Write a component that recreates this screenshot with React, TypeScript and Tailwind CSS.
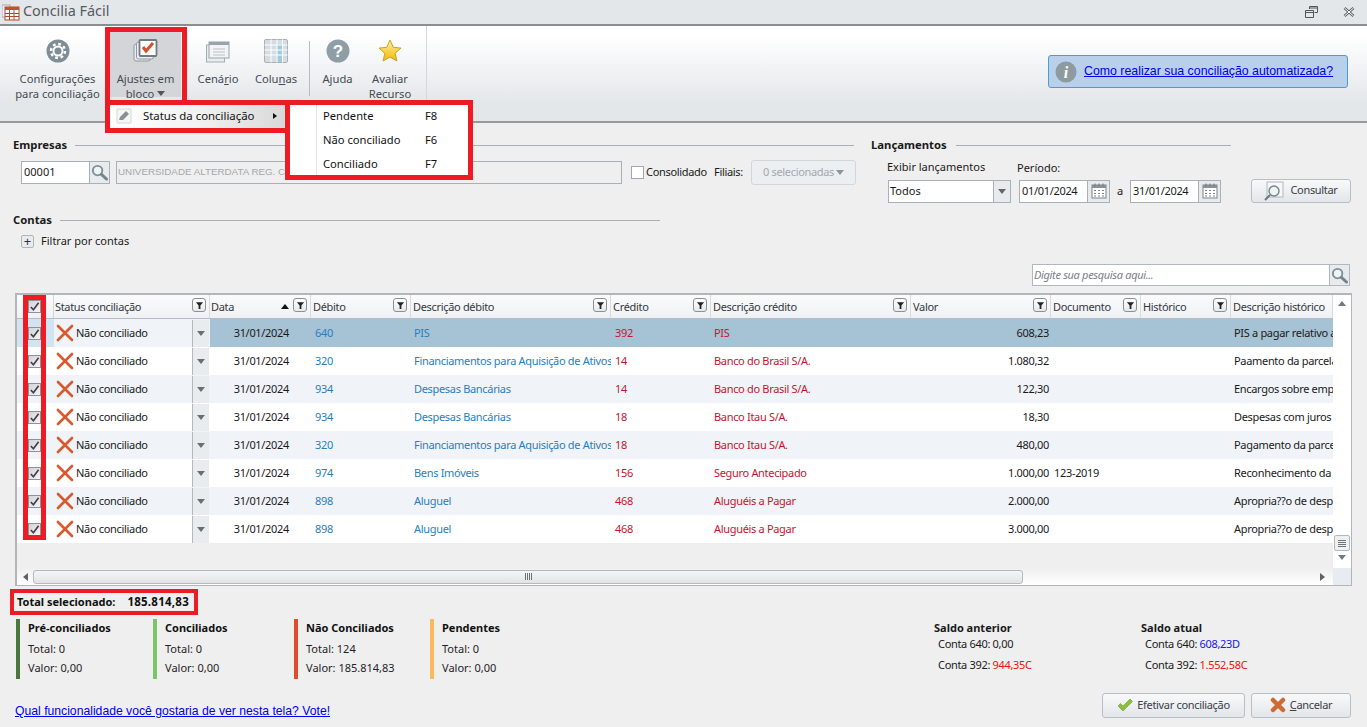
import React from "react";

const FONT = "[font-family:'Noto_Sans',sans-serif]";
const ARIAL = "[font-family:'Liberation_Sans',Arial,sans-serif]";
const GRID = "grid grid-cols-[37px_156px_101px_100px_200px_100px_200px_140px_90px_90px_102px]";
const TIGHT = "text-[11px] tracking-[-0.32px]";

function Search({ className = "w-[17px] h-[17px]" }: { className?: string }) {
  return (
    <svg viewBox="0 0 18 18" className={className}>
      <circle cx="7" cy="7" r="5" fill="#eef3f5" stroke="#7d9098" strokeWidth="2" />
      <path d="M11 11l5.5 5" stroke="#74858d" strokeWidth="3" strokeLinecap="round" />
    </svg>
  );
}

function Calendar() {
  return (
    <svg viewBox="0 0 16 16" className="w-[16px] h-[16px]">
      <rect x="1" y="2" width="14" height="13" fill="#fff" stroke="#7c8388" />
      <rect x="1" y="2" width="14" height="3" fill="#8b9296" />
      <path d="M4 0.5v3M8 0.5v3M12 0.5v3" stroke="#6f767a" />
      <path d="M3 7h2v1H3zM7 7h2v1H7zM11 7h2v1h-2zM3 10h2v1H3zM7 10h2v1H7zM11 10h2v1h-2zM3 12.500h2v1H3zM7 12.500h2v1H7zM11 12.500h2v1h-2z" fill="#7c8388" />
    </svg>
  );
}

function Filter() {
  return (
    <span className="flex h-[14px] w-[14px] items-center justify-center rounded-[3px] border border-[#8c9196] bg-gradient-to-b from-white to-[#e6e9ec]">
      <svg viewBox="0 0 10 10" className="h-[9px] w-[9px]">
        <path d="M1 1.500h8L6 5v4H4V5z" fill="#222" />
      </svg>
    </span>
  );
}

function RedX({ className = "w-[18px] h-[18px]" }: { className?: string }) {
  return (
    <svg viewBox="0 0 18 18" className={className}>
      <path d="M2 2l14 14M16 2L2 16" stroke="#d9592f" strokeWidth="2.700" strokeLinecap="round" />
    </svg>
  );
}

function CheckBox() {
  return (
    <span className="flex h-[13px] w-[13px] items-center justify-center border border-[#8d9299] bg-gradient-to-br from-[#d0d3d8] to-[#f5f6f8]">
      <svg viewBox="0 0 12 12" className="h-[11px] w-[11px]">
        <path d="M2 6.500l2.800 3L10.500 2" fill="none" stroke="#3c3f44" strokeWidth="1.800" />
      </svg>
    </span>
  );
}

function Caret({ up = false, className = "" }: { up?: boolean; className?: string }) {
  return (
    <svg viewBox="0 0 8 5" className={`h-[5px] w-[8px] ${className}`}>
      <path d={up ? "M0 5l4-5 4 5z" : "M0 0l4 5 4-5z"} fill="currentColor" />
    </svg>
  );
}

function RibbonButton({ icon, lines, active = false, widthClass }: { icon: React.ReactNode; lines: React.ReactNode[]; active?: boolean; widthClass: string }) {
  return (
    <div className={`flex h-[66px] shrink-0 flex-col items-center ${widthClass} ${active ? "bg-[#d3d5d8]" : ""}`}>
      <div className="flex h-[33px] shrink-0 items-end justify-center pb-[1px]">{icon}</div>
      <div className="mt-[7px] text-center text-[11.200px] leading-[15px] text-[#444b52]">
        {lines.map((l, i) => (
          <div key={i} className="whitespace-nowrap">{l}</div>
        ))}
      </div>
    </div>
  );
}

function SectionTitle({ title, lineClass }: { title: string; lineClass: string }) {
  return (
    <div className="flex items-center">
      <span className="text-[11.300px] font-bold leading-[16px] text-[#1a1a1a]">{title}</span>
      <span className={`h-px bg-[#a9afb8] ${lineClass}`} />
    </div>
  );
}

const btn = `flex items-center justify-center rounded-[3px] border border-[#b9bec4] bg-gradient-to-b from-[#f8f9fa] to-[#e3e6ea] pb-[1px] text-[#3a4046] ${TIGHT}`;

const HEAD: [string, boolean, boolean][] = [
  ["Status conciliação", true, false],
  ["Data", true, true],
  ["Débito", true, false],
  ["Descrição débito", true, false],
  ["Crédito", true, false],
  ["Descrição crédito", true, false],
  ["Valor", true, false],
  ["Documento", true, false],
  ["Histórico", true, false],
  ["Descrição histórico", false, false],
];

const ROWS = [
  ["640", "PIS", "392", "PIS", "608,23", "", "PIS a pagar relativo a"],
  ["320", "Financiamentos para Aquisição de Ativos", "14", "Banco do Brasil S/A.", "1.080,32", "", "Paamento da parcela"],
  ["934", "Despesas Bancárias", "14", "Banco do Brasil S/A.", "122,30", "", "Encargos sobre empre"],
  ["934", "Despesas Bancárias", "18", "Banco Itau S/A.", "18,30", "", "Despesas com juros s"],
  ["320", "Financiamentos para Aquisição de Ativos", "18", "Banco Itau S/A.", "480,00", "", "Pagamento da parcela"],
  ["974", "Bens Imóveis", "156", "Seguro Antecipado", "1.000,00", "123-2019", "Reconhecimento da d"],
  ["898", "Aluguel", "468", "Aluguéis a Pagar", "2.000,00", "", "Apropria??o de despe"],
  ["898", "Aluguel", "468", "Aluguéis a Pagar", "3.000,00", "", "Apropria??o de despe"],
];

const cell = `overflow-hidden whitespace-nowrap px-[3px] leading-[28px] ${TIGHT}`;

function Stat({ bar, title, total, valor, widthClass }: { bar: string; title: string; total: string; valor: string; widthClass: string }) {
  return (
    <div className={`flex h-[60px] ${widthClass}`}>
      <span className={`w-[4px] ${bar}`} />
      <div className="ml-[8px] text-[11px] text-[#1f2327]">
        <div className="font-bold leading-[18px] text-[#111]">{title}</div>
        <div className="mt-[2px] leading-[19px]">Total: {total}</div>
        <div className="leading-[19px]">Valor: {valor}</div>
      </div>
    </div>
  );
}

function Saldo({ title, a, b, aClass, bClass, widthClass }: { title: string; a: string; b: string; aClass: string; bClass: string; widthClass: string }) {
  return (
    <div className={`text-[#1a1a1a] ${TIGHT} ${widthClass}`}>
      <div className="text-[11px] font-bold leading-[16px] tracking-normal">{title}</div>
      <div className="ml-[4px] leading-[16px]">Conta 640: <span className={aClass}>{a}</span></div>
      <div className="ml-[4px] mt-[5px] leading-[16px]">Conta 392: <span className={bClass}>{b}</span></div>
    </div>
  );
}

export default function App() {
  return (
    <div className={`relative flex h-[727px] w-[1367px] flex-col overflow-hidden bg-[#efefef] ${FONT}`}>
      {/* Title bar */}
      <div className="flex h-[26px] shrink-0 items-center border-b-2 border-[#8b8e91] bg-[#e4e7ea] pl-[2px]">
        <svg viewBox="0 0 18 18" className="h-[18px] w-[18px]">
          <rect x="0" y="2" width="8" height="12" fill="#f1f1f1" stroke="#a8a8a8" />
          <rect x="3" y="4" width="14" height="13" fill="#fff" stroke="#b04a2c" />
          <rect x="3" y="4" width="14" height="3" fill="#c0532f" />
          <path d="M3 10.500h14M3 13.500h14M7.500 7v10M12 7v10" stroke="#b04a2c" />
        </svg>
        <span className="ml-[3px] pb-[2px] text-[14.400px] text-[#555b60]">Concilia Fácil</span>
        <div className="ml-auto flex items-center">
          <svg viewBox="0 0 13 12" className="h-[12px] w-[13px] text-[#51565a]">
            <path d="M4.500 3V.5h8v6H9.500M.5 4.500h8v7h-8zM.5 6.500h8M4.500 2h8" fill="none" stroke="currentColor" />
          </svg>
          <svg viewBox="0 0 12 10" className="ml-[25px] mr-[12px] h-[10px] w-[12px]">
            <path d="M1.500 1l9 8M10.500 1l-9 8" stroke="#5c6165" strokeWidth="2.600" />
            <path d="M1.500 1l9 8M10.500 1l-9 8" stroke="#fff" strokeWidth="1" />
          </svg>
        </div>
      </div>

      {/* Ribbon */}
      <div className="flex h-[97px] shrink-0 items-start border-b-2 border-[#96999d] bg-gradient-to-b from-white from-[10%] to-[#e4e7ea] to-[80%]">
        <div className="flex h-[77px] w-[427px] shrink-0 items-start border-r border-[#d5d7da] pt-[5px]">
          <div className="w-[14px] shrink-0" />
          <RibbonButton
            widthClass="w-[87px]"
            lines={["Configurações", "para conciliação"]}
            icon={
              <svg viewBox="0 0 24 24" className="h-[24px] w-[24px]">
                <circle cx="12" cy="12" r="11.500" fill="#7f8d94" />
                <circle cx="12" cy="12" r="4.500" fill="none" stroke="#fff" strokeWidth="2" />
                <circle cx="12" cy="12" r="7" fill="none" stroke="#fff" strokeWidth="2.500" strokeDasharray="2.800 2.700" />
              </svg>
            }
          />
          <div className="w-[9px] shrink-0" />
          <RibbonButton
            active
            widthClass="w-[71px]"
            lines={[
              <>A<u>j</u>ustes em</>,
              <span className="inline-flex items-center gap-[3px]">bloco<Caret className="h-[3px] w-[5px] text-[#555]" /></span>,
            ]}
            icon={
              <svg viewBox="0 0 26 24" className="h-[24px] w-[26px]">
                <rect x="1" y="5" width="16" height="17" rx="2" fill="#e9ecee" stroke="#8f9aa0" />
                <rect x="3.500" y="3" width="17" height="17" rx="2" fill="#eef0f2" stroke="#8f9aa0" />
                <rect x="6.500" y="1" width="17" height="16" rx="1" fill="#fff" stroke="#707a80" strokeWidth="1.800" />
                <path d="M10 8l3 4 7-8" fill="none" stroke="#d2512a" strokeWidth="3" />
              </svg>
            }
          />
          <RibbonButton
            widthClass="w-[62px] ml-[6px]"
            lines={[<>Cená<u>r</u>io</>]}
            icon={
              <svg viewBox="0 0 24 24" className="h-[24px] w-[24px]">
                <rect x="0.500" y="6" width="18" height="17" fill="#e9edf0" stroke="#a2adb3" />
                <rect x="3" y="3" width="20" height="16" fill="#f2f4f5" stroke="#98a4ab" />
                <rect x="3" y="3" width="20" height="3" fill="#98a4ab" />
                <path d="M7 10h12M7 13h12M7 16h12" stroke="#b9c2c7" />
              </svg>
            }
          />
          <RibbonButton
            widthClass="w-[54px]"
            lines={[<>Colu<u>n</u>as</>]}
            icon={
              <svg viewBox="0 0 24 24" className="h-[24px] w-[24px]">
                <rect x="0.500" y="0.500" width="23" height="23" rx="1.500" fill="#d5dde2" stroke="#a7b1b7" />
                <rect x="13" y="5" width="5" height="18" fill="#9fcbe0" />
                <path d="M0.500 6h23M0.500 11h23M0.500 16h23M7 0.500v23M13 0.500v23M18.500 0.500v23" stroke="#fff" />
              </svg>
            }
          />
          <div className="ml-[6px] mt-[10px] h-[55px] w-px shrink-0 bg-[#b7bcc0]" />
          <RibbonButton
            widthClass="w-[55px]"
            lines={["Ajuda"]}
            icon={
              <svg viewBox="0 0 24 24" className="h-[24px] w-[24px]">
                <circle cx="12" cy="12" r="11.500" fill="#8f9ea6" />
                <text x="12" y="18" textAnchor="middle" fontSize="17" fontWeight="700" fill="#fff" fontFamily="Liberation Sans">?</text>
              </svg>
            }
          />
          <RibbonButton
            widthClass="w-[50px]"
            lines={["Avaliar", "Recurso"]}
            icon={
              <svg viewBox="0 0 24 24" className="h-[24px] w-[24px]">
                <defs>
                  <linearGradient id="star" x1="0" x2="0" y1="0" y2="1">
                    <stop offset="0" stopColor="#fff2a0" />
                    <stop offset="1" stopColor="#f2b705" />
                  </linearGradient>
                </defs>
                <path d="M12 1l3.300 7.300 7.700.8-5.800 5.100 1.700 7.800L12 18l-6.900 4 1.700-7.800L1 9.100l7.700-.8z" fill="url(#star)" stroke="#c9a227" strokeLinejoin="round" />
              </svg>
            }
          />
        </div>
        <div className="ml-auto mr-[19px] mt-[29px] flex h-[33px] w-[300px] items-center rounded-[3px] border border-[#4a9bd6] bg-[#b9d0ea] pl-[6px]">
          <svg viewBox="0 0 22 22" className="h-[22px] w-[22px] shrink-0">
            <circle cx="11" cy="11" r="10.500" fill="#8d9a9f" />
            <text x="11" y="17" textAnchor="middle" fontSize="16" fontWeight="700" fontStyle="italic" fill="#fff" fontFamily="Liberation Serif">i</text>
          </svg>
          <a className={`ml-[7px] whitespace-nowrap text-[12.350px] text-[#0000ee] underline ${ARIAL}`}>Como realizar sua conciliação automatizada?</a>
        </div>
      </div>

      {/* Filters */}
      <div className="flex h-[140px] shrink-0 pt-[14px]">
        <div className="w-[871px] shrink-0 pl-[13px]">
          <SectionTitle title="Empresas" lineClass="ml-[8px] w-[779px]" />
          <div className="ml-[8px] mt-[7px] flex items-center">
            <div className="flex h-[23px] w-[89px] border border-[#aab0b8] bg-white">
              <span className="flex-1 pl-[2px] text-[11px] leading-[20px] text-[#1a1a1a]">00001</span>
              <span className="flex w-[20px] items-center justify-center border-l border-[#aab0b8] bg-[#e8ebee]"><Search /></span>
            </div>
            <div className={`ml-[6px] flex h-[23px] w-[506px] items-center border border-[#aab0b8] bg-[#efefef] pl-[1px] text-[9.800px] text-[#a4a8ac] ${ARIAL}`}>UNIVERSIDADE ALTERDATA REG. CONTABIL</div>
            <span className="ml-[9px] h-[13px] w-[13px] border border-[#a0a6ad] bg-white" />
            <span className={`ml-[2px] w-[59px] whitespace-nowrap text-[#1a1a1a] ${TIGHT}`}>Consolidado</span>
            <span className={`ml-[9px] w-[30px] whitespace-nowrap text-[#1a1a1a] ${TIGHT}`}>Filiais:</span>
            <div className={`ml-[7px] flex h-[25px] w-[105px] items-center justify-center gap-[2px] rounded-[3px] border border-[#d2d6da] bg-[#eceff2] pb-[1px] text-[#a3a8ad] ${TIGHT}`}>
              0 selecionadas <Caret className="h-[3px] w-[6px] text-[#8f9499]" />
            </div>
          </div>
          <div className="mt-[27px]">
            <SectionTitle title="Contas" lineClass="ml-[8px] w-[600px]" />
          </div>
          <div className="ml-[8px] mt-[5px] flex items-center">
            <span className="flex h-[13px] w-[13px] items-center justify-center rounded-[2px] border border-[#b0b5bb] bg-[#e9ecef] text-[13px] leading-none text-[#333]">+</span>
            <span className="ml-[7px] text-[11px] leading-[16px] text-[#1a1a1a]">Filtrar por contas</span>
          </div>
        </div>
        <div className="flex-1">
          <SectionTitle title="Lançamentos" lineClass="ml-[9px] w-[275px]" />
          <div className="mt-[6px] flex text-[11px] leading-[16px] text-[#1a1a1a]">
            <span className="ml-[16px] w-[130px]">Exibir lançamentos</span>
            <span className="mt-[1px]">Período:</span>
          </div>
          <div className="mt-[3px] flex items-center">
            <div className="ml-[17px] flex h-[23px] w-[123px] border border-[#aab0b8] bg-white">
              <span className="flex-1 pl-[1px] text-[11px] leading-[19px] text-[#1a1a1a]">Todos</span>
              <span className="flex w-[17px] items-center justify-center border-l border-[#aab0b8] bg-[#e8ebee] text-[#666]"><Caret /></span>
            </div>
            <div className="ml-[8px] flex h-[23px] w-[91px] border border-[#aab0b8] bg-white">
              <span className={`flex-1 pl-[2px] leading-[19px] text-[#1a1a1a] ${TIGHT}`}>01/01/2024</span>
              <span className="flex w-[22px] items-center justify-center border-l border-[#aab0b8] bg-[#e8ebee]"><Calendar /></span>
            </div>
            <span className="w-[20px] text-center text-[11px] text-[#1a1a1a]">a</span>
            <div className="flex h-[23px] w-[91px] border border-[#aab0b8] bg-white">
              <span className={`flex-1 pl-[2px] leading-[19px] text-[#1a1a1a] ${TIGHT}`}>31/01/2024</span>
              <span className="flex w-[22px] items-center justify-center border-l border-[#aab0b8] bg-[#e8ebee]"><Calendar /></span>
            </div>
            <div className={`${btn} ml-[30px] h-[24px] w-[100px] gap-[6px]`}>
              <svg viewBox="0 0 20 20" className="h-[20px] w-[20px]">
                <rect x="3" y="1" width="16" height="15" fill="#f7f8f9" stroke="#b2b7bc" />
                <circle cx="10" cy="10" r="5" fill="#eef4f4" stroke="#75848a" strokeWidth="1.400" />
                <path d="M6 14l-5 5" stroke="#6a777d" strokeWidth="2" />
              </svg>
              Consultar
            </div>
          </div>
        </div>
      </div>

      {/* Search */}
      <div className="flex h-[30px] shrink-0 justify-end pr-[17px] pt-[1px]">
        <div className="flex h-[22px] w-[318px] border border-[#b3b8be] bg-white">
          <span className={`flex-1 pl-[1px] italic leading-[19px] text-[#7b8086] ${TIGHT}`}>Digite sua pesquisa aqui...</span>
          <span className="flex w-[20px] items-center justify-center border-l border-[#b3b8be] bg-[#e8ebee]"><Search /></span>
        </div>
      </div>

      {/* Table */}
      <div className="mx-[15px] flex h-[293px] w-[1337px] shrink-0 flex-col border-2 border-b-[1px] border-r-[1px] border-[#b2b6bb]">
        <div className="flex h-[273px] shrink-0">
          <div className="w-[1316px] shrink-0 overflow-hidden">
            <div className={`${GRID} h-[24px] border-b border-[#b5bcc9] bg-gradient-to-b from-[#fbfbfc] to-[#eff1f4]`}>
              <div className="flex items-center justify-center border-r border-[#d2d6dc] pr-[2px]"><CheckBox /></div>
              {HEAD.map(([t, f, s], i) => (
                <div key={t} className={`flex items-center border-r border-[#d7dbe0] pr-[3px] text-[#34383d] ${i < 2 ? "pl-[1px]" : "pl-[2px]"} ${TIGHT}`}>
                  <span className="flex-1 whitespace-nowrap pt-[1px]">{t}</span>
                  {s && <Caret up className="mr-[4px] h-[4px] w-[7px] text-[#111]" />}
                  {f && <span className="-mt-[3px]"><Filter /></span>}
                </div>
              ))}
            </div>
            {ROWS.map((r, i) => {
              const selected = i === 0;
              const base = i % 2 === 0 ? "bg-[#f0f4f9]" : "bg-white";
              const data = selected ? "bg-[#a6c3d5]" : base;
              return (
                <div key={i} className={`${GRID} h-[28px]`}>
                  <div className={`flex items-center justify-center pr-[2px] ${selected ? "bg-[#d2e3f2]" : base}`}><CheckBox /></div>
                  <div className={`flex items-center ${base}`}>
                    <RedX className="ml-[2px] h-[18px] w-[18px] shrink-0" />
                    <span className={`ml-[2px] flex-1 whitespace-nowrap text-[#1a1a1a] ${TIGHT}`}>Não conciliado</span>
                    <span className="mr-[1px] flex h-[27px] w-[17px] items-center justify-center border-l border-[#b4b8bd] bg-[#e9ecef] text-[#6a6f74]"><Caret className="h-[3px] w-[6px]" /></span>
                  </div>
                  <div className={`${cell} ${data} pr-[22px] text-right text-[#1a1a1a]`}>31/01/2024</div>
                  <div className={`${cell} ${data} pl-[4px] text-[#2a7dc0]`}>{r[0]}</div>
                  <div className={`${cell} ${data} text-[#2a7dc0]`}>{r[1]}</div>
                  <div className={`${cell} ${data} pl-[4px] text-[#c5142f]`}>{r[2]}</div>
                  <div className={`${cell} ${data} text-[#c5142f]`}>{r[3]}</div>
                  <div className={`${cell} ${data} pr-[2px] text-right text-[#1a1a1a]`}>{r[4]}</div>
                  <div className={`${cell} ${data} text-[#1a1a1a]`}>{r[5]}</div>
                  <div className={data} />
                  <div className={`${cell} ${data} text-[#1a1a1a]`}>{r[6]}</div>
                </div>
              );
            })}
          </div>
          <div className="flex w-[18px] shrink-0 flex-col items-center bg-white">
            <Caret up className="mt-[6px] text-[#74797e]" />
            <div className="mt-auto flex h-[16px] w-[16px] items-center justify-center rounded-[2px] border border-[#b4b9be] bg-[#eef0f2]">
              <svg viewBox="0 0 8 7" className="h-[7px] w-[8px]"><path d="M0 .5h8M0 2.500h8M0 4.500h8M0 6.500h8" stroke="#6e7378" /></svg>
            </div>
            <Caret className="mb-[8px] mt-[4px] text-[#74797e]" />
          </div>
        </div>
        <div className="flex h-[17px] shrink-0">
          <div className="flex w-[1316px] shrink-0 items-center bg-gradient-to-b from-[#efefef] to-white">
            <svg viewBox="0 0 5 8" className="ml-[6px] h-[8px] w-[5px] text-[#5d6267]"><path d="M5 0L0 4l5 4z" fill="currentColor" /></svg>
            <div className="ml-[5px] flex h-[14px] w-[990px] items-center justify-center rounded-[3px] border border-[#b4b9be] bg-gradient-to-b from-[#f4f5f6] to-[#e1e4e7]">
              <svg viewBox="0 0 7 7" className="h-[7px] w-[7px]"><path d="M.5 0v7M2.500 0v7M4.500 0v7M6.500 0v7" stroke="#6e7378" /></svg>
            </div>
            <svg viewBox="0 0 5 8" className="ml-auto mr-[8px] h-[8px] w-[5px] text-[#5d6267]"><path d="M0 0l5 4-5 4z" fill="currentColor" /></svg>
          </div>
          <div className="flex-1 bg-[#e8ebef]" />
        </div>
      </div>

      {/* Total */}
      <div className="ml-[17px] mt-[8px] h-[20px] shrink-0 text-[11px] font-bold leading-[16px] text-[#111]">
        Total selecionado:<span className="ml-[12px] text-[11.500px] tracking-[0.25px]">185.814,83</span>
      </div>

      {/* Stats */}
      <div className="mt-[5px] flex h-[60px] shrink-0 pl-[16px]">
        <Stat widthClass="w-[137px]" bar="bg-[#47773c]" title="Pré-conciliados" total="0" valor="0,00" />
        <Stat widthClass="w-[141px]" bar="bg-[#7cc468]" title="Conciliados" total="0" valor="0,00" />
        <Stat widthClass="w-[136px]" bar="bg-[#e04b2b]" title="Não Conciliados" total="124" valor="185.814,83" />
        <Stat widthClass="w-[504px]" bar="bg-[#fbb95c]" title="Pendentes" total="0" valor="0,00" />
        <div className="flex pt-[1px]">
          <Saldo widthClass="w-[207px]" title="Saldo anterior" a="0,00" b="944,35C" aClass="" bClass="text-[#f01010]" />
          <Saldo widthClass="w-[200px]" title="Saldo atual" a="608,23D" b="1.552,58C" aClass="text-[#1515f0]" bClass="text-[#f01010]" />
        </div>
      </div>

      {/* Footer */}
      <div className="mt-[14px] flex h-[25px] shrink-0 items-center pl-[15px] pr-[16px]">
        <a className={`whitespace-nowrap pt-[12px] text-[12.200px] text-[#0000ee] underline ${ARIAL}`}>Qual funcionalidade você gostaria de ver nesta tela? Vote!</a>
        <div className={`${btn} ml-auto h-[25px] w-[143px] gap-[4px]`}>
          <svg viewBox="0 0 16 14" className="h-[14px] w-[16px]">
            <path d="M1 8l2.500-2.500L6 8l7-7 2.500 2.500L6 13z" fill="#8cbf3f" stroke="#6f9a33" strokeWidth="0.600" />
          </svg>
          Efetivar conciliação
        </div>
        <div className={`${btn} ml-[6px] h-[25px] w-[100px] gap-[4px]`}>
          <svg viewBox="0 0 16 16" className="h-[16px] w-[16px]">
            <path d="M3 3l10 10M13 3L3 13" stroke="#cf6a35" strokeWidth="4.500" strokeLinecap="round" />
          </svg>
          <span><u>C</u>ancelar</span>
        </div>
      </div>

      {/* Drop-down menu overlay */}
      <div className="absolute left-[110px] top-[105px] flex h-[23px] w-[175px] items-center bg-gradient-to-r from-white via-[#f2f2f2] to-[#d9d9d9] pb-[2px] text-[11.400px] text-[#111]">
        <svg viewBox="0 0 16 16" className="ml-[6px] h-[16px] w-[16px]">
          <path d="M1 1h14v14H1z" fill="#f6f6f6" stroke="#d6d6d6" />
          <path d="M3 12l1-3 6-6 3 3-6 6z" fill="#8b8f94" />
        </svg>
        <span className="ml-[11px] flex-1 whitespace-nowrap">Status da conciliação</span>
        <svg viewBox="0 0 4 6" className="mr-[8px] h-[6px] w-[4px]"><path d="M0 0l4 3-4 3z" fill="#111" /></svg>
      </div>
      <div className="absolute left-[290px] top-[105px] flex h-[70px] w-[178px] bg-white text-[11.200px] text-[#111]">
        <div className="w-[27px] border-r border-[#e4e4e4]" />
        <div className="flex flex-1 flex-col">
          {[["Pendente", "F8"], ["Não conciliado", "F6"], ["Conciliado", "F7"]].map(([a, b]) => (
            <div key={a} className="flex h-[24px] shrink-0 items-center pb-[1px] pl-[6px]">
              <span className="w-[102px] whitespace-nowrap">{a}</span>
              <span>{b}</span>
            </div>
          ))}
        </div>
      </div>

      {/* Red annotation frames */}
      <div className="pointer-events-none absolute left-[105px] top-[27px] h-[74px] w-[82px] border-[5px] border-b-0 border-[#ed1c24]" />
      <div className="pointer-events-none absolute left-[105px] top-[100px] h-[33px] w-[185px] border-[5px] border-[#ed1c24]" />
      <div className="pointer-events-none absolute left-[285px] top-[100px] h-[80px] w-[188px] border-[5px] border-[#ed1c24]" />
      <div className="pointer-events-none absolute left-[23px] top-[295px] h-[245px] w-[23px] border-[5px] border-[#ed1c24]" />
      <div className="pointer-events-none absolute left-[10px] top-[589px] h-[26px] w-[188px] border-[4px] border-[#ed1c24]" />
    </div>
  );
}
